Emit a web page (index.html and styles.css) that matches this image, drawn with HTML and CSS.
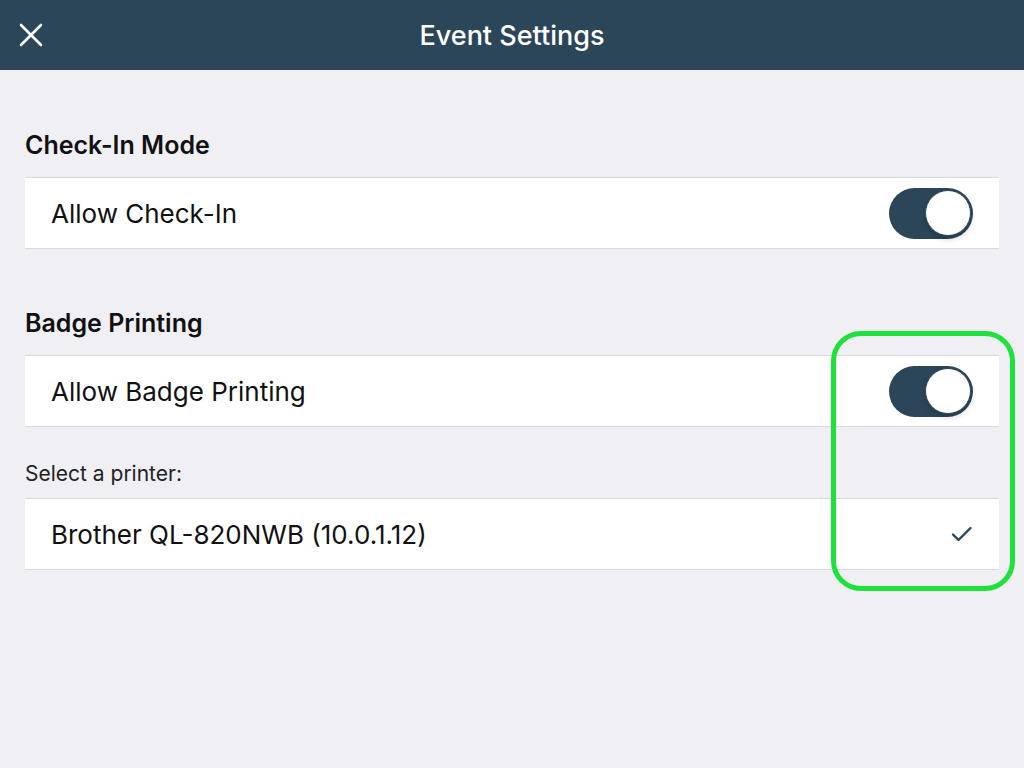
FILE: index.html
```html
<!DOCTYPE html>
<html>
<head>
    <title>Event Settings</title>
    <link rel="stylesheet" href="styles.css">
</head>
<body>
    <!-- Top bar -->
    <div class="navbar">
        <button class="close-btn" aria-label="Close">
            <svg width="24" height="24" viewBox="0 0 24 24">
                <path d="M2 2 L22 22 M22 2 L2 22" stroke="#fff" stroke-width="2.6" stroke-linecap="round"/>
            </svg>
        </button>
        <h1>Event Settings</h1>
    </div>

    <div class="content">
        <!-- Check-in -->
        <h2 class="section-title">Check-In Mode</h2>
        <div class="row">
            <span>Allow Check-In</span>
            <div class="switch on"><div class="knob"></div></div>
        </div>

        <!-- Badge printing -->
        <h2 class="section-title second">Badge Printing</h2>
        <div class="row">
            <span>Allow Badge Printing</span>
            <div class="switch on"><div class="knob"></div></div>
        </div>

        <p class="sub-label">Select a printer:</p>
        <div class="row">
            <span>Brother QL-820NWB (10.0.1.12)</span>
            <svg class="check" width="22" height="18" viewBox="0 0 22 18">
                <path d="M2 9.5 L7.5 15 L19.5 3" fill="none" stroke="#2c4659" stroke-width="2.4" stroke-linecap="round" stroke-linejoin="round"/>
            </svg>
        </div>

        <div class="highlight"></div>
    </div>
</body>
</html>
```

FILE: styles.css
```css
body {
    margin: 0;
    font-family: 'Inter', 'Roboto', sans-serif;
    background-color: #efeff4;
    color: #111;
    min-height: 100vh;
}

.navbar {
    height: 70px;
    background-color: #2c4659;
    display: flex;
    align-items: center;
    justify-content: center;
    position: relative;
}

.navbar h1 {
    margin: 0;
    color: #fff;
    font-size: 27px;
    font-weight: 500;
}

.close-btn {
    position: absolute;
    left: 19px;
    top: 23px;
    background: none;
    border: none;
    padding: 0;
    width: 24px;
    height: 24px;
    cursor: pointer;
}

.content {
    padding: 60px 25px 0;
    position: relative;
}

.section-title {
    margin: 0 0 17px;
    font-size: 25px;
    font-weight: 600;
    line-height: 30px;
}

.section-title.second {
    margin-top: 59px;
}

.row {
    height: 70px;
    background-color: #fff;
    border-top: 1px solid #d9d9de;
    border-bottom: 1px solid #d9d9de;
    display: flex;
    align-items: center;
    justify-content: space-between;
    padding: 0 26px;
    font-size: 26px;
}

.sub-label {
    margin: 34px 0 11px;
    font-size: 21px;
    line-height: 26px;
    color: #222;
}

/* toggle switch */
.switch {
    width: 84px;
    height: 51px;
    border-radius: 26px;
    background-color: #2c4659;
    position: relative;
}

.switch .knob {
    position: absolute;
    top: 2px;
    right: 2px;
    width: 44px;
    height: 44px;
    border-radius: 50%;
    background-color: #fff;
    border: 1.5px solid #2c4659;
    box-shadow: 0 3px 6px rgba(0, 0, 0, 0.18);
}

/* green outline around the right-hand controls */
.highlight {
    position: absolute;
    left: 831px;
    top: 261px;
    width: 174px;
    height: 250px;
    border: 5px solid #1fe13c;
    border-radius: 30px;
}
```
